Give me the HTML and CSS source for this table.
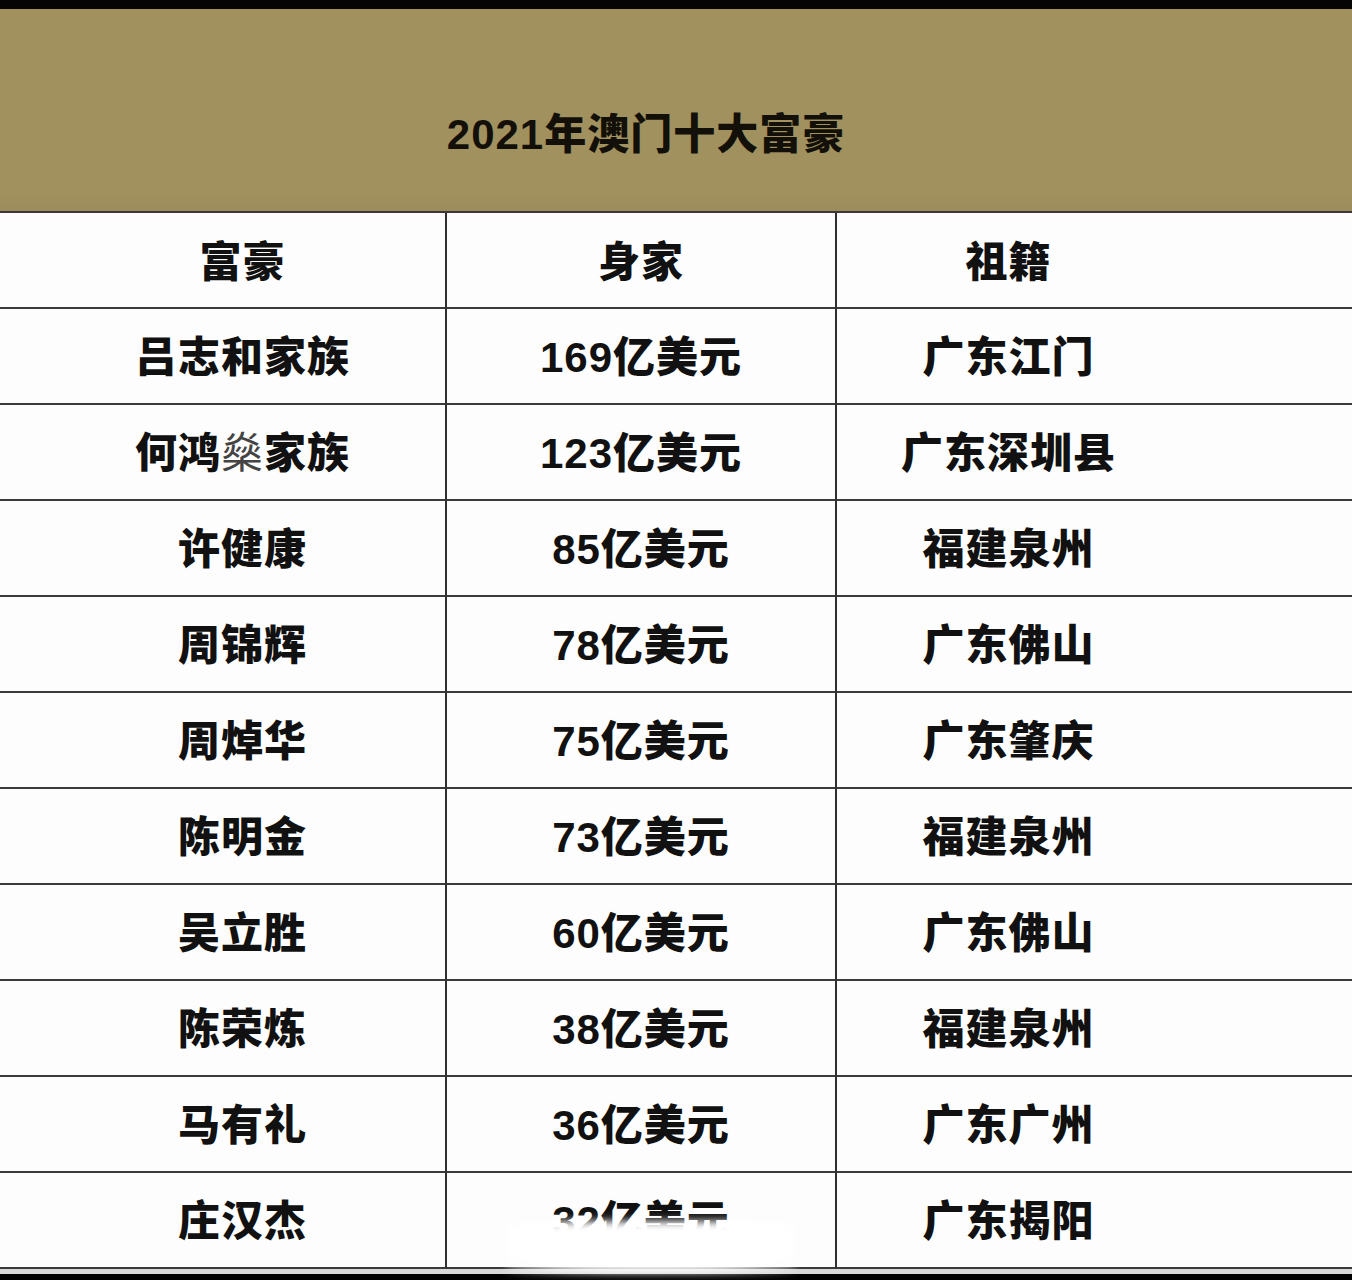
FILE: index.html
```html
<!DOCTYPE html>
<html lang="zh-CN">
<head>
<meta charset="utf-8">
<title>2021年澳门十大富豪</title>
<link rel="stylesheet" href="styles.css">
</head>
<body>
<div class="page">
  <div class="top-bar"></div>
  <div class="banner">
    <h1 class="title">2021年澳门十大富豪</h1>
  </div>
  <div class="table">
    <div class="cell c1 head">富豪</div><div class="cell c2 head">身家</div><div class="cell c3 head">祖籍</div>
    <div class="cell c1">吕志和家族</div><div class="cell c2">169亿美元</div><div class="cell c3">广东江门</div>
    <div class="cell c1">何鸿<span class="light">燊</span>家族</div><div class="cell c2">123亿美元</div><div class="cell c3">广东深圳县</div>
    <div class="cell c1">许健康</div><div class="cell c2">85亿美元</div><div class="cell c3">福建泉州</div>
    <div class="cell c1">周锦辉</div><div class="cell c2">78亿美元</div><div class="cell c3">广东佛山</div>
    <div class="cell c1">周焯华</div><div class="cell c2">75亿美元</div><div class="cell c3">广东肇庆</div>
    <div class="cell c1">陈明金</div><div class="cell c2">73亿美元</div><div class="cell c3">福建泉州</div>
    <div class="cell c1">吴立胜</div><div class="cell c2">60亿美元</div><div class="cell c3">广东佛山</div>
    <div class="cell c1">陈荣炼</div><div class="cell c2">38亿美元</div><div class="cell c3">福建泉州</div>
    <div class="cell c1">马有礼</div><div class="cell c2">36亿美元</div><div class="cell c3">广东广州</div>
    <div class="cell c1">庄汉杰</div><div class="cell c2 smudged">32亿美元<span class="smudge"></span></div><div class="cell c3">广东揭阳</div>
  </div>
  <div class="bottom-strip"></div>
</div>
</body>
</html>
```

FILE: styles.css
```css
html, body {
  margin: 0;
  padding: 0;
  background: #000;
}
.page {
  width: 1352px;
  height: 1280px;
  overflow: hidden;
  background: #000;
  font-family: "Liberation Sans", "Noto Sans CJK SC", sans-serif;
  color: #111;
}
.top-bar {
  height: 9px;
  background: #050505;
}
.banner {
  height: 202px;
  background: linear-gradient(#a0915f 0%, #a1915f 92%, #9c8c5c 100%);
  display: flex;
  align-items: center;
  justify-content: center;
  box-sizing: border-box;
  padding-top: 50px;
  padding-right: 60px;
}
.title {
  margin: 0;
  font-size: 42px;
  font-weight: 900;
  letter-spacing: 1px;
  color: #121008;
  line-height: 1;
}
.table {
  display: grid;
  grid-template-columns: 447px 390px 1fr;
  grid-auto-rows: 96px;
  background: #fdfdfd;
  border-top: 2px solid #3a3a3a;
}
.cell {
  display: flex;
  align-items: center;
  justify-content: center;
  box-sizing: border-box;
  border-bottom: 2px solid #3a3a3a;
  font-size: 42px;
  font-weight: 900;
  letter-spacing: 1px;
  line-height: 1;
  padding-top: 4px;
}
.c1 {
  border-right: 2px solid #2e2e2e;
  padding-left: 40px;
}
.c2 {
  border-right: 2px solid #2e2e2e;
}
.c3 {
  padding-right: 172px;
}
.head {
  padding-top: 6px;
}
.light {
  font-weight: 400;
  color: #444;
}
.smudged {
  position: relative;
}
.smudge {
  position: absolute;
  left: 60px;
  right: 40px;
  top: 48px;
  bottom: -6px;
  background: radial-gradient(ellipse at 50% 40%, #ffffff 55%, rgba(255,255,255,0.85) 70%, rgba(255,255,255,0) 100%);
  filter: blur(4px);
}
.bottom-strip {
  height: 5px;
  background: #d8d8d8;
}
```
